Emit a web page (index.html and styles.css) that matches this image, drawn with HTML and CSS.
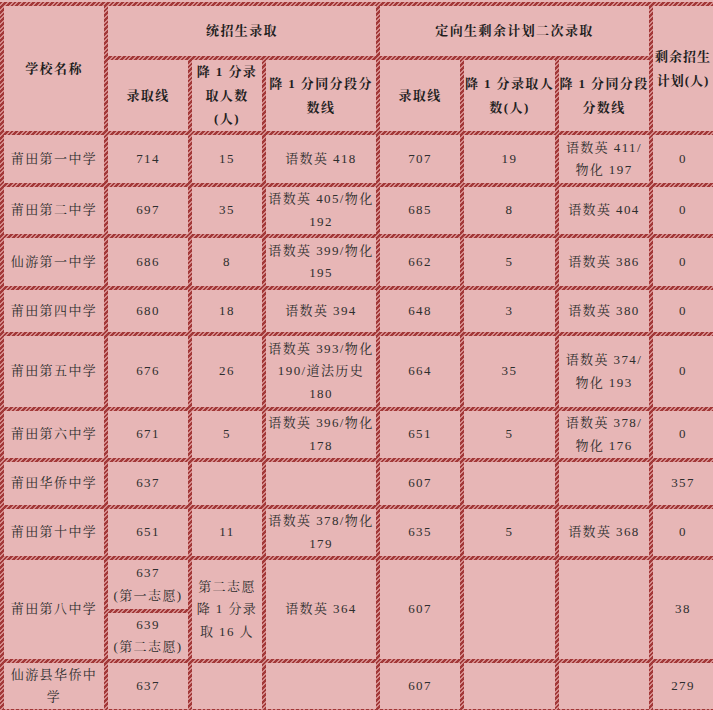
FILE: index.html
```html
<!DOCTYPE html>
<html lang="zh-CN">
<head>
<meta charset="utf-8">
<title>录取分数线</title>
<link rel="stylesheet" href="styles.css">
</head>
<body>
<div class="table">
  <div class="c th rs2">学校名称</div>
  <div class="c th cs3">统招生录取</div>
  <div class="c th cs3">定向生剩余计划二次录取</div>
  <div class="c th rs2 last">剩余招生<br>计划(人)</div>

  <div class="c th">录取线</div>
  <div class="c th">降 1 分录<br>取人数<br>(人)</div>
  <div class="c th">降 1 分同分段分<br>数线</div>
  <div class="c th">录取线</div>
  <div class="c th">降 1 分录取人<br>数(人)</div>
  <div class="c th">降 1 分同分段<br>分数线</div>

  <div class="c name">莆田第一中学</div><div class="c">714</div><div class="c">15</div><div class="c">语数英 418</div><div class="c">707</div><div class="c">19</div><div class="c">语数英 411/<br>物化 197</div><div class="c">0</div>

  <div class="c name">莆田第二中学</div><div class="c">697</div><div class="c">35</div><div class="c">语数英 405/物化<br>192</div><div class="c">685</div><div class="c">8</div><div class="c">语数英 404</div><div class="c">0</div>

  <div class="c name">仙游第一中学</div><div class="c">686</div><div class="c">8</div><div class="c">语数英 399/物化<br>195</div><div class="c">662</div><div class="c">5</div><div class="c">语数英 386</div><div class="c">0</div>

  <div class="c name">莆田第四中学</div><div class="c">680</div><div class="c">18</div><div class="c">语数英 394</div><div class="c">648</div><div class="c">3</div><div class="c">语数英 380</div><div class="c">0</div>

  <div class="c name">莆田第五中学</div><div class="c">676</div><div class="c">26</div><div class="c">语数英 393/物化<br>190/道法历史<br>180</div><div class="c">664</div><div class="c">35</div><div class="c">语数英 374/<br>物化 193</div><div class="c">0</div>

  <div class="c name">莆田第六中学</div><div class="c">671</div><div class="c">5</div><div class="c">语数英 396/物化<br>178</div><div class="c">651</div><div class="c">5</div><div class="c">语数英 378/<br>物化 176</div><div class="c">0</div>

  <div class="c name">莆田华侨中学</div><div class="c">637</div><div class="c"></div><div class="c"></div><div class="c">607</div><div class="c"></div><div class="c"></div><div class="c">357</div>

  <div class="c name">莆田第十中学</div><div class="c">651</div><div class="c">11</div><div class="c">语数英 378/物化<br>179</div><div class="c">635</div><div class="c">5</div><div class="c">语数英 368</div><div class="c">0</div>

  <div class="c name rs2">莆田第八中学</div>
  <div class="c">637<br>(第一志愿)</div>
  <div class="c rs2">第二志愿<br>降 1 分录<br>取 16 人</div>
  <div class="c rs2">语数英 364</div>
  <div class="c rs2">607</div>
  <div class="c rs2"></div>
  <div class="c rs2"></div>
  <div class="c rs2">38</div>
  <div class="c">639<br>(第二志愿)</div>

  <div class="c name">仙游县华侨中<br>学</div><div class="c">637</div><div class="c"></div><div class="c"></div><div class="c">607</div><div class="c"></div><div class="c"></div><div class="c">279</div>
</div>
</body>
</html>
```

FILE: styles.css
```css
html, body {
  margin: 0;
  padding: 0;
  overflow: hidden;
  background: #e7b6b6;
}

.table {
  width: 717px;
  box-sizing: border-box;
  margin-top: 2px;
  padding: 4px;
  display: grid;
  grid-template-columns: 100px 80px 70px 110px 80px 91px 90px 60px;
  grid-template-rows: 50px 71px 48px 47px 48px 42px 71px 47px 43px 47px 49px 46px 46px;
  gap: 4px;
  background: repeating-linear-gradient(135deg, #a23838 0 1.9px, #d48c8c 1.9px 3.3px);
  font-family: "Liberation Serif", "Noto Serif CJK SC", "Noto Sans CJK SC", serif;
  font-size: 13px;
  line-height: 22.5px;
  letter-spacing: 1.4px;
  color: #2e2e2e;
}

.c {
  background: #e7b6b6;
  display: flex;
  align-items: center;
  justify-content: center;
  text-align: center;
  white-space: nowrap;
  overflow: hidden;
}

.th {
  font-weight: bold;
  color: #1e1e1e;
  line-height: 23.5px;
}

.rs2 { grid-row: span 2; }
.cs3 { grid-column: span 3; }
.last { letter-spacing: 1px; }
```
